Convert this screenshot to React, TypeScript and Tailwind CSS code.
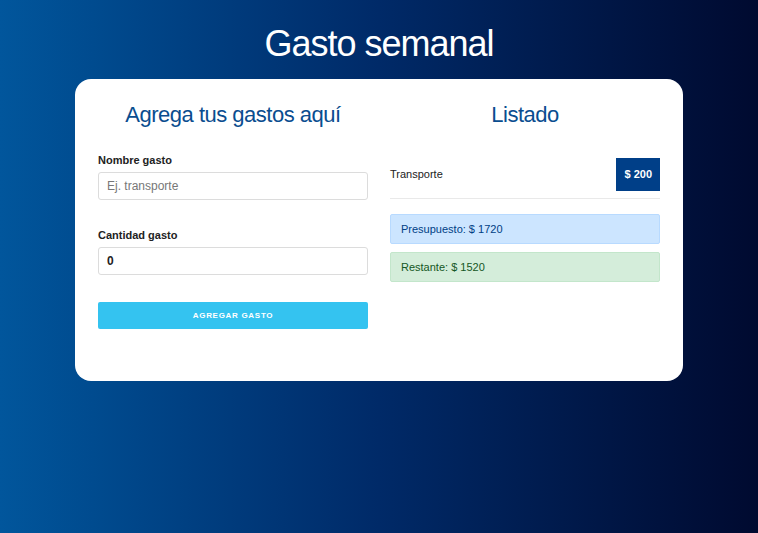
import { useState } from "react";

const FONT = { fontFamily: '"Liberation Sans", Arial, sans-serif' };

export default function App() {
  const [nombre, setNombre] = useState("");
  const [cantidad, setCantidad] = useState("0");

  return (
    <div
      style={FONT}
      className="w-[758px] h-[533px] bg-gradient-to-r from-[#01569c] via-[#002a68] to-[#000a30] flex flex-col items-center"
    >
      {/* Header */}
      <h1 className="pt-[26px] text-[36px] leading-none tracking-[-1px] text-white h-[79px]">
        Gasto semanal
      </h1>

      {/* Card */}
      <div className="w-[608px] h-[302px] bg-white rounded-[16px] px-[23px] pt-[25px] grid grid-cols-2 gap-x-[22px]">
        {/* Form */}
        <div className="flex flex-col">
          <h2 className="text-center text-[22px] leading-none tracking-[-0.5px] text-[#0a4d8f] mb-[29px]">
            Agrega tus gastos aquí
          </h2>

          <label className="text-[11px] leading-none font-bold text-[#222] mb-[6px]">
            Nombre gasto
          </label>
          <input
            type="text"
            value={nombre}
            onChange={(e) => setNombre(e.target.value)}
            placeholder="Ej. transporte"
            className="h-[28px] border border-[#dcdcdc] rounded-[3px] px-[8px] text-[12px] text-[#222] placeholder:text-[#777] outline-none"
          />

          <label className="mt-[30px] text-[11px] leading-none font-bold text-[#222] mb-[6px]">
            Cantidad gasto
          </label>
          <input
            type="number"
            value={cantidad}
            onChange={(e) => setCantidad(e.target.value)}
            className="h-[28px] border border-[#dcdcdc] rounded-[3px] px-[8px] text-[12px] font-bold text-[#222] outline-none"
          />

          <button className="mt-[27px] h-[27px] bg-[#34c3f0] rounded-[2px] text-white text-[8px] font-bold tracking-[0.7px] uppercase">
            Agregar gasto
          </button>
        </div>

        {/* Listado */}
        <div className="flex flex-col">
          <h2 className="text-center text-[22px] leading-none tracking-[-0.5px] text-[#0a4d8f] mb-[32px]">
            Listado
          </h2>

          <div className="flex items-center justify-between pb-[7px] border-b border-[#e9e9e9]">
            <span className="text-[11px] text-[#222]">Transporte</span>
            <span className="h-[33px] px-[8px] flex items-center bg-[#003f88] text-white text-[11px] font-bold">
              $ 200
            </span>
          </div>

          <div className="mt-[15px] h-[30px] flex items-center px-[10px] bg-[#cce5ff] border border-[#b8daff] rounded-[2px] text-[11px] text-[#004085]">
            Presupuesto: $ 1720
          </div>
          <div className="mt-[8px] h-[30px] flex items-center px-[10px] bg-[#d4edda] border border-[#c3e6cb] rounded-[2px] text-[11px] text-[#155724]">
            Restante: $ 1520
          </div>
        </div>
      </div>
    </div>
  );
}
